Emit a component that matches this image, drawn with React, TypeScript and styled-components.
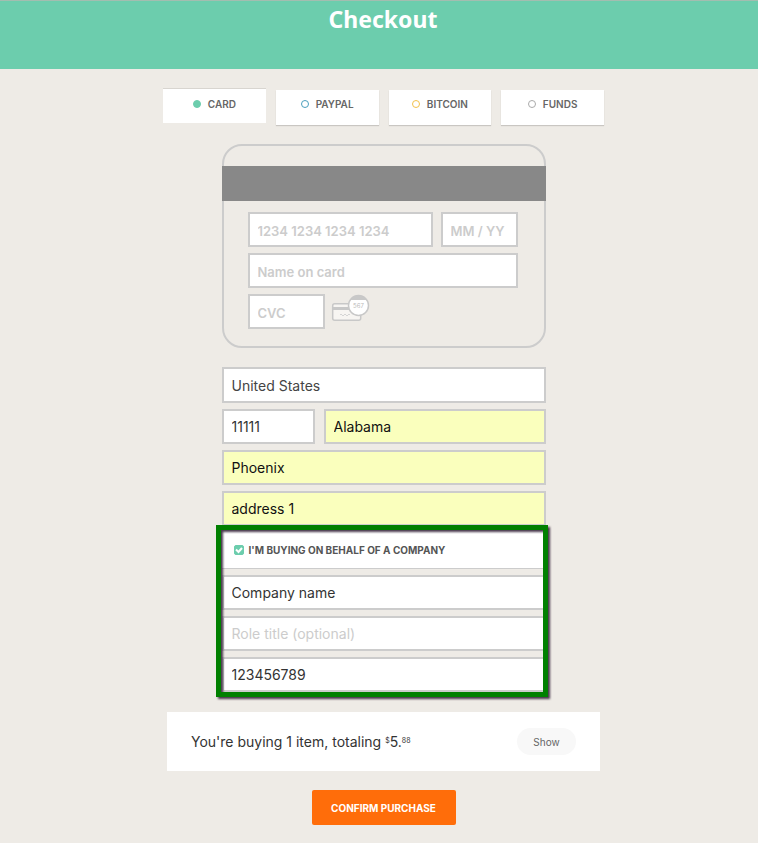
import React, { useState } from "react";
import styled, { createGlobalStyle } from "styled-components";

const GlobalStyle = createGlobalStyle`
  *, *::before, *::after { box-sizing: border-box; }
  body {
    margin: 0;
    background: #eeebe6;
    color: #333;
    font-family: Inter, "Open Sans", sans-serif;
    font-size: 14px;
  }
  button, input, select { font: inherit; color: inherit; margin: 0; }
`;

const Page = styled.div`
  min-height: 100vh;
  display: flex;
  flex-direction: column;
`;

const Header = styled.header`
  height: 69px;
  padding: 3px 0 0 8px;
  border-top: 1px solid #a3bdb0;
  background: #6ccdad;
  text-align: center;
`;

const Title = styled.h1`
  margin: 0;
  color: #fff;
  font-family: "Noto Sans", "Open Sans", sans-serif;
  font-size: 23px;
  line-height: 30px;
  font-weight: 700;
`;

const Checkout = styled.form`
  display: flex;
  flex-direction: column;
  align-items: center;
  padding: 19px 0 16px 9px;
`;

const Methods = styled.div`
  display: grid;
  grid-template-columns: repeat(4, 1fr);
  gap: 10px;
  width: 100%;
  max-width: 441px;
  margin-bottom: 19px;
`;

const Method = styled.label<{ $active: boolean }>`
  display: flex;
  align-items: center;
  justify-content: center;
  gap: 7px;
  height: 35px;
  padding-bottom: ${(p) => (p.$active ? 3 : 7)}px;
  margin-top: ${(p) => (p.$active ? 0 : 2)}px;
  background: #fff;
  box-shadow: ${(p) => (p.$active ? "inset 0 1px 0 #d8d5d0" : "0 1px 1px #c9c6c2")};
  color: #666;
  font-size: 10px;
  line-height: 14px;
  font-weight: 600;
  text-transform: uppercase;
  cursor: pointer;
`;

const MethodRadio = styled.input<{ $color: string }>`
  appearance: none;
  width: 8px;
  height: 8px;
  border: 1px solid ${(p) => p.$color};
  border-radius: 50%;
  background: #fff;
  &:checked { background: ${(p) => p.$color}; }
`;

const CardPanel = styled.fieldset`
  width: 100%;
  max-width: 324px;
  min-width: 0;
  margin: 0 0 19px;
  padding: 20px 0 17px;
  border: 2px solid #ccc;
  border-radius: 20px;
`;

const Stripe = styled.div`
  height: 35px;
  margin: 0 -2px 11px;
  background: #888;
`;

const CardFields = styled.div`
  display: flex;
  flex-direction: column;
  gap: 6px;
  padding: 0 26px 0 24px;
`;

const Row = styled.div<{ $gap: number }>`
  display: flex;
  gap: ${(p) => p.$gap}px;
`;

const Field = styled.input<{ $width?: number; $filled?: boolean; $strong?: boolean }>`
  display: block;
  flex: ${(p) => (p.$width ? `0 0 ${p.$width}px` : "1 1 auto")};
  width: ${(p) => (p.$width ? `${p.$width}px` : "100%")};
  min-width: 0;
  height: 35px;
  padding: ${(p) => (p.$strong ? "3px 8px 0" : "0 8px")};
  border: 2px solid #ccc;
  border-radius: 0;
  outline: 0;
  background: ${(p) => (p.$filled ? "#faffbd" : "#fff")};
  color: ${(p) => (p.$filled ? "#111" : "#333")};
  font-size: ${(p) => (p.$strong ? 13 : 14)}px;
  font-weight: ${(p) => (p.$strong ? 600 : 400)};
  &::placeholder { color: #ccc; opacity: 1; }
`;

const CountrySelect = styled.select`
  appearance: none;
  width: 100%;
  height: 36px;
  padding: 0 8px;
  border: 2px solid #ccc;
  border-radius: 0;
  outline: 0;
  background: #fff;
  color: #444;
  font-weight: 400;
`;

const Address = styled.div`
  display: flex;
  flex-direction: column;
  gap: 6px;
  width: 100%;
  max-width: 324px;
  & > ${Field} { flex: none; }
`;

const Company = styled.div`
  position: relative;
  display: flex;
  flex-direction: column;
  gap: 6px;
  width: 100%;
  max-width: 324px;
  margin-bottom: 20px;
  & > ${Field} { flex: none; }

  &::after {
    content: "";
    position: absolute;
    inset: -1px -2px -5px -6px;
    border: 5px solid #008000;
    filter: drop-shadow(2px 2px 1px rgba(40, 20, 45, 0.85));
    pointer-events: none;
  }
`;

const Consent = styled.label`
  display: flex;
  align-items: center;
  gap: 5px;
  height: 43px;
  padding: 5px 12px 0;
  border-bottom: 1px solid #ccc;
  background: #fff;
  color: #555;
  font-size: 10px;
  line-height: 14px;
  font-weight: 700;
  cursor: pointer;
`;

const Tick = styled.span`
  position: relative;
  display: flex;
  width: 10px;
  height: 10px;
  svg {
    position: absolute;
    inset: 0;
    pointer-events: none;
  }
`;

const TickInput = styled.input`
  appearance: none;
  width: 10px;
  height: 10px;
  border: 1px solid #6ccdad;
  border-radius: 2px;
  background: #fff;
  &:checked { background: #6ccdad; }
`;

const Summary = styled.section`
  display: flex;
  align-items: center;
  justify-content: space-between;
  width: 100%;
  max-width: 433px;
  height: 59px;
  margin-bottom: 19px;
  padding: 0 24px;
  background: #fff;
`;

const SummaryText = styled.p`
  margin: 0;
  line-height: 20px;
`;

const Small = styled.sup`
  font-size: 7px;
  line-height: 0;
  vertical-align: 4px;
`;

const ShowButton = styled.button`
  width: 59px;
  height: 27px;
  padding: 0;
  border: 0;
  border-radius: 14px;
  background: #f8f8f8;
  color: #666;
  font-size: 10px;
  cursor: pointer;
`;

const ConfirmButton = styled.button`
  width: 144px;
  height: 35px;
  padding: 0;
  border: 0;
  border-radius: 2px;
  background: #ff6d0a;
  color: #fff;
  font-size: 10px;
  font-weight: 700;
  cursor: pointer;
`;

const CvcIcon = () => (
  <svg width="40" height="28" viewBox="0 0 40 28" fill="none" aria-hidden="true">
    <rect x="1.700" y="9.700" width="28" height="16.500" rx="2" fill="#f7f5f2" stroke="#c8c8c8" strokeWidth="1.500" />
    <path d="M2 13H30V16H2Z" fill="#c8c8c8" />
    <path d="M9 21q1-2 2 0t2 0 2 0 2 0 2 0" stroke="#d5d5d5" />
    <circle cx="27.500" cy="11.500" r="10" fill="#fff" stroke="#c8c8c8" strokeWidth="1.500" />
    <path d="M19 6A10 10 0 0 1 36 6Z" fill="#c8c8c8" />
    <text x="27.500" y="14" textAnchor="middle" fontFamily="Inter, sans-serif" fontSize="6" fill="#bbb">567</text>
  </svg>
);

const methods = [
  { name: "Card", color: "#6ccdad" },
  { name: "PayPal", color: "#4a9fbd" },
  { name: "Bitcoin", color: "#f2c14a" },
  { name: "Funds", color: "#aaa" },
];

export default function App() {
  const [method, setMethod] = useState("Card");

  return (
    <Page>
      <GlobalStyle />
      <Header>
        <Title>Checkout</Title>
      </Header>
      <Checkout onSubmit={(e) => e.preventDefault()}>
        <Methods role="radiogroup" aria-label="Payment method">
          {methods.map((m) => (
            <Method key={m.name} $active={m.name === method}>
              <MethodRadio
                type="radio"
                name="method"
                $color={m.color}
                checked={m.name === method}
                onChange={() => setMethod(m.name)}
              />
              {m.name}
            </Method>
          ))}
        </Methods>

        <CardPanel aria-label="Card details">
          <Stripe />
          <CardFields>
            <Row $gap={8}>
              <Field $strong aria-label="Card number" placeholder="1234 1234 1234 1234" />
              <Field $strong $width={77} aria-label="Expiry date" placeholder="MM / YY" />
            </Row>
            <Row $gap={0}>
              <Field $strong aria-label="Name on card" placeholder="Name on card" />
            </Row>
            <Row $gap={6}>
              <Field $strong $width={77} aria-label="CVC" placeholder="CVC" />
              <CvcIcon />
            </Row>
          </CardFields>
        </CardPanel>

        <Address>
          <CountrySelect aria-label="Country" defaultValue="United States">
            <option>United States</option>
          </CountrySelect>
          <Row $gap={9}>
            <Field $width={93} aria-label="Postal code" defaultValue="11111" />
            <Field $filled aria-label="State" defaultValue="Alabama" />
          </Row>
          <Field $filled aria-label="City" defaultValue="Phoenix" />
          <Field $filled aria-label="Address" defaultValue="address 1" />
        </Address>

        <Company>
          <Consent>
            <Tick>
              <TickInput type="checkbox" defaultChecked />
              <svg width="10" height="10" viewBox="0 0 10 10" fill="none" aria-hidden="true">
                <path d="M2 4.500L4.500 7L8 3" stroke="#fff" strokeWidth="2" />
              </svg>
            </Tick>
            I'M BUYING ON BEHALF OF A COMPANY
          </Consent>
          <Field aria-label="Company name" defaultValue="Company name" />
          <Field aria-label="Role title" placeholder="Role title (optional)" />
          <Field aria-label="Company number" defaultValue="123456789" />
        </Company>

        <Summary>
          <SummaryText>
            You're buying 1 item, totaling <Small>$</Small>5.<Small>88</Small>
          </SummaryText>
          <ShowButton type="button">Show</ShowButton>
        </Summary>

        <ConfirmButton type="submit">CONFIRM PURCHASE</ConfirmButton>
      </Checkout>
    </Page>
  );
}
